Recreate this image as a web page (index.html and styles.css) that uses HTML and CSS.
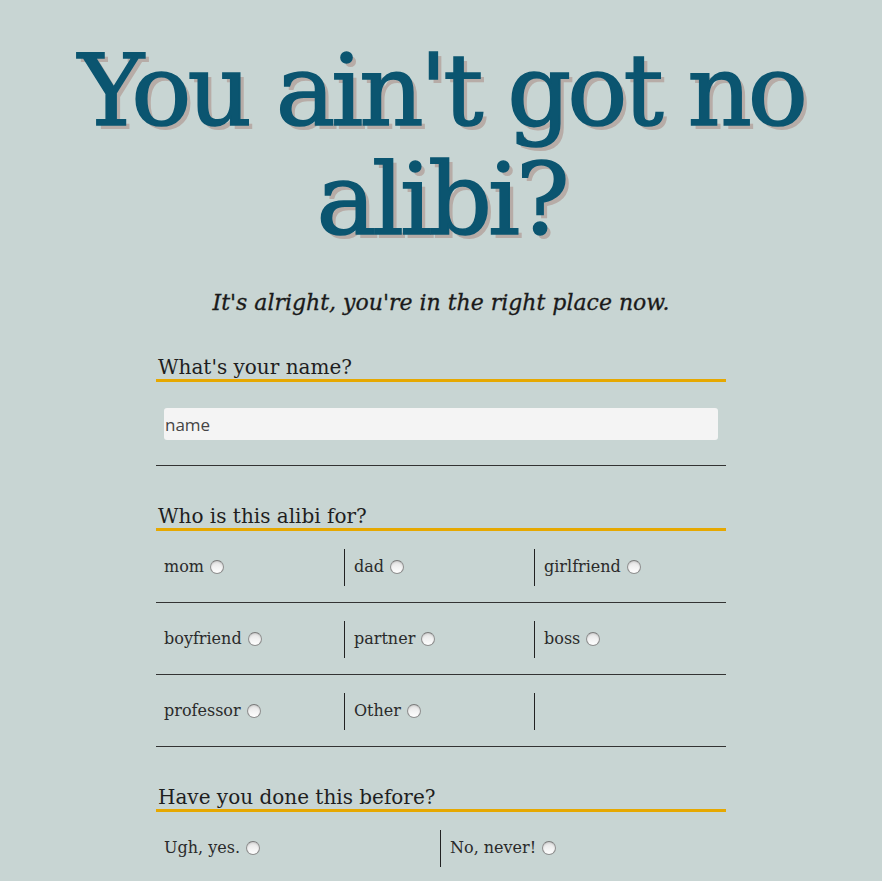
FILE: index.html
```html
<!DOCTYPE html>
<html>
<head>
<meta charset="utf-8">
<title>Alibi</title>
<link rel="stylesheet" href="styles.css">
</head>
<body>
<header class="hero">
  <h1 class="title">You ain't got no alibi?</h1>
  <p class="tagline">It's alright, you're in the right place now.</p>
</header>
<form class="form">
  <section class="section">
    <h2 class="question">What's your name?</h2>
    <div class="name-row">
      <input class="name-input" type="text" placeholder="name">
    </div>
  </section>
  <section class="section">
    <h2 class="question">Who is this alibi for?</h2>
    <div class="grid grid-3">
      <label class="cell first">mom <span class="radio"></span></label>
      <label class="cell">dad <span class="radio"></span></label>
      <label class="cell">girlfriend <span class="radio"></span></label>
    </div>
    <div class="grid grid-3">
      <label class="cell first">boyfriend <span class="radio"></span></label>
      <label class="cell">partner <span class="radio"></span></label>
      <label class="cell">boss <span class="radio"></span></label>
    </div>
    <div class="grid grid-3">
      <label class="cell first">professor <span class="radio"></span></label>
      <label class="cell">Other <span class="radio"></span></label>
      <span class="cell"></span>
    </div>
  </section>
  <section class="section">
    <h2 class="question">Have you done this before?</h2>
    <div class="grid grid-2">
      <label class="cell first">Ugh, yes. <span class="radio"></span></label>
      <label class="cell">No, never! <span class="radio"></span></label>
    </div>
  </section>
</form>
</body>
</html>
```

FILE: styles.css
```css
html, body {
  margin: 0;
  padding: 0;
}
body {
  background: #c8d5d3;
  font-family: "DejaVu Serif", "Liberation Serif", serif;
  color: #222;
}
.hero {
  text-align: center;
  padding-top: 36px;
}
.title {
  margin: 0 auto;
  width: 800px;
  font-family: "DejaVu Serif", serif;
  font-weight: normal;
  font-size: 100px;
  line-height: 109px;
  color: #0b5570;
  -webkit-text-stroke: 1.6px #0b5570;
  text-shadow: 4px 4px 0 #b7aca7;
  letter-spacing: -4px;
}
.tagline {
  margin: 36px 0 0;
  font-style: italic;
  font-size: 22px;
  color: #1a1a1a;
  -webkit-text-stroke: 0.3px #1a1a1a;
}
.form {
  width: 570px;
  margin: 40px auto 0;
}
.question {
  margin: 0;
  padding-left: 2px;
  font-weight: normal;
  font-size: 20px;
  line-height: 24px;
  color: #1e1e1e;
  border-bottom: 3px solid #e6a800;
}
.section + .section {
  margin-top: 38px;
}
.name-row {
  padding: 26px 8px 25px;
  border-bottom: 1px solid #333;
}
.name-input {
  display: block;
  box-sizing: border-box;
  width: 554px;
  height: 32px;
  border: none;
  border-radius: 3px;
  background: #f4f4f4;
  padding: 0 1px;
  font-family: "Open Sans", "DejaVu Sans", sans-serif;
  font-size: 17px;
  color: #444;
  outline: none;
}
.name-input::placeholder {
  color: #444;
}
.grid {
  display: grid;
  padding: 18px 0 16px;
  border-bottom: 1px solid #333;
}
.grid-3 {
  grid-template-columns: 188px 190px 192px;
}
.grid-2 {
  grid-template-columns: 284px 286px;
  border-bottom: none;
}
.cell {
  display: flex;
  align-items: center;
  gap: 6px;
  height: 37px;
  padding-left: 9px;
  padding-bottom: 3px;
  box-sizing: border-box;
  border-left: 1px solid #222;
  font-size: 16px;
  color: #2a2a2a;
}
.cell.first {
  border-left: none;
  padding-left: 8px;
}
.radio {
  display: inline-block;
  box-sizing: border-box;
  width: 14px;
  height: 14px;
  margin-top: 1px;
  border: 1px solid #8f8f8f;
  border-top-color: #7a7a7a;
  border-radius: 50%;
  background: linear-gradient(#e4e4e4, #ffffff);
  box-shadow: inset 0 1px 2px rgba(0,0,0,0.12);
}
```
